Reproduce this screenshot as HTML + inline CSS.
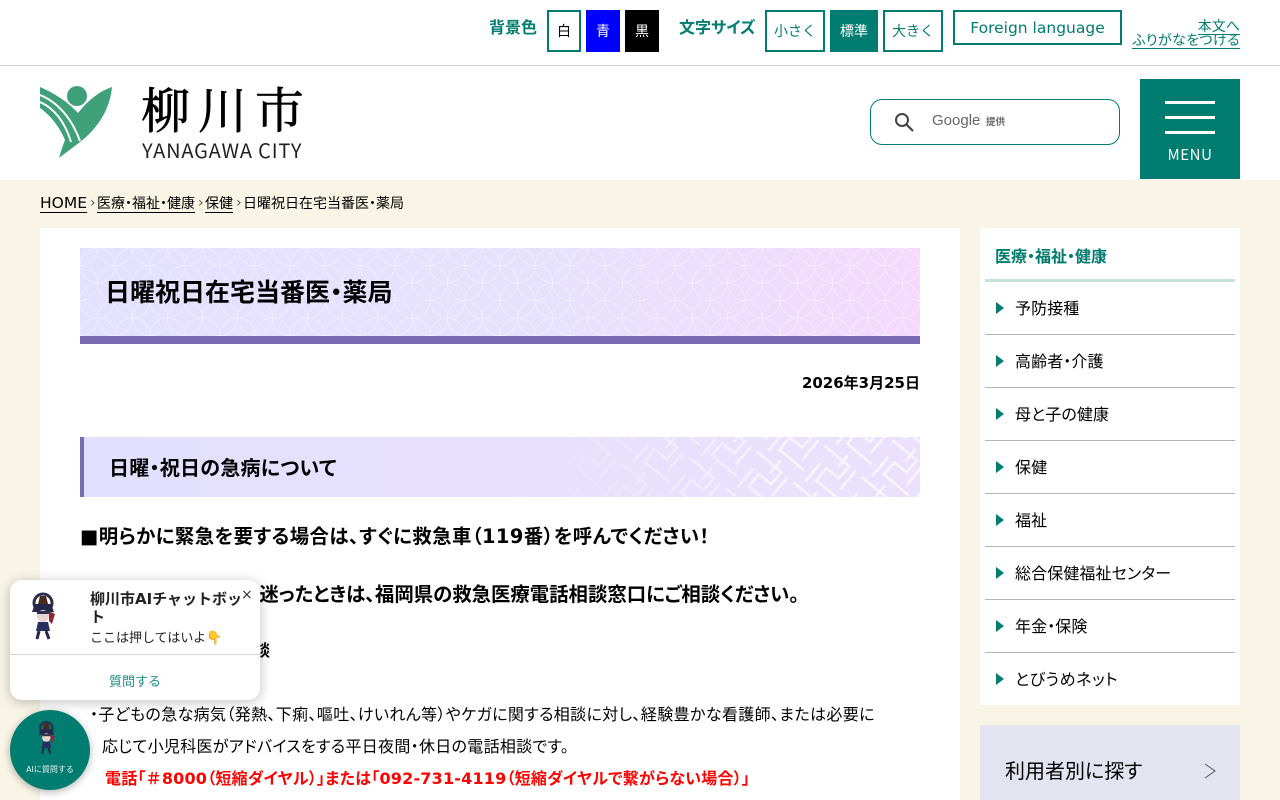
<!DOCTYPE html>
<html lang="ja"><head><meta charset="utf-8"><title>日曜祝日在宅当番医・薬局</title>
<style>
html,body{margin:0;padding:0}
body{width:1280px;height:800px;overflow:hidden;position:relative;background:#f8f5e6;font-family:"DejaVu Sans","Noto Sans CJK JP",sans-serif;color:#000;font-feature-settings:"palt"}
.a{position:absolute;white-space:nowrap}
.n{font-feature-settings:normal}
.b{position:absolute;box-sizing:border-box;border:2px solid #007c70;background:#fff;color:#007c70;text-align:center;font-size:14px;font-feature-settings:normal}
.c{position:absolute;white-space:nowrap;top:194px;font-size:14px;line-height:20px;height:18px}
.c.u{border-bottom:1px solid #000}
.sep{color:#555;top:193px}
.side{position:absolute;left:985px;width:250px;height:53px;border-bottom:1px solid #b4b4b4;box-sizing:border-box}
.side i{position:absolute;left:11px;top:20px;width:0;height:0;border-left:8px solid #007c70;border-top:6px solid transparent;border-bottom:6px solid transparent}
.side span{position:absolute;left:30px;top:15px;font-size:16px;line-height:24px;white-space:nowrap;letter-spacing:.1px}
</style></head><body>
<div class="a" style="left:0;top:0;width:1280px;height:66px;background:#fff;border-bottom:1px solid #ccc;box-sizing:border-box"></div>
<div class="a" style="left:0;top:66px;width:1280px;height:114px;background:#fff"></div>

<div class="a" style="left:489px;top:17px;font-size:16px;line-height:22px;font-weight:700;color:#007c70">背景色</div>
<div class="b" style="left:547px;top:10px;width:34px;height:42px;line-height:40px;color:#000">白</div>
<div class="b" style="left:586px;top:10px;width:34px;height:42px;line-height:40px;color:#fff;background:#0000ff;border-color:#0000ff">青</div>
<div class="b" style="left:625px;top:10px;width:34px;height:42px;line-height:40px;color:#fff;background:#000;border-color:#000">黒</div>
<div class="a" style="left:679px;top:17px;font-size:16px;line-height:22px;font-weight:700;color:#007c70">文字サイズ</div>
<div class="b" style="left:765px;top:10px;width:60px;height:42px;line-height:40px">小さく</div>
<div class="b" style="left:830px;top:10px;width:48px;height:42px;line-height:40px;background:#007c70;color:#fff">標準</div>
<div class="b" style="left:883px;top:10px;width:60px;height:42px;line-height:40px">大きく</div>
<div class="b" style="left:953px;top:10px;width:169px;height:35px;line-height:33px;font-size:15.5px">Foreign language</div>
<div class="a" style="right:40px;top:18px;font-size:14px;line-height:19px;color:#007c70;border-bottom:1px solid #007c70;height:16px">本文へ</div>
<div class="a" style="right:40px;top:32px;font-size:14px;line-height:18px;letter-spacing:.4px;color:#007c70;border-bottom:1px solid #007c70;height:16px">ふりがなをつける</div>

<svg class="a" style="left:40px;top:86px" width="73" height="73" viewBox="0 0 73 73">
<circle cx="37" cy="10" r="10" fill="#3fa07a"/>
<path d="M0 1C14 7 28 16 38 27C48 14 60 5 72 1C70 22 60 38 46 51C38 58 28 65 19 72C21 65 23 59 25 54C19 40 10 29 0 22Z" fill="#3fa07a"/>
<path d="M0 9C18 16 32 33 40 55M0 16C14 22 25 36 31 56" fill="none" stroke="#fff" stroke-width="2"/>
</svg>
<div class="a" style="left:141px;top:76px;font-family:'Noto Serif CJK SC','Noto Sans CJK JP',serif;font-weight:400;-webkit-text-stroke:.7px #000;font-size:49px;line-height:64px;letter-spacing:8px;font-feature-settings:normal">柳川市</div>
<div class="a" style="left:142px;top:138px;font-family:'Noto Sans CJK JP',sans-serif;font-size:20px;line-height:24px;letter-spacing:.8px;color:#222">YANAGAWA CITY</div>

<div class="a" style="left:870px;top:99px;width:250px;height:46px;box-sizing:border-box;border:1px solid #007c70;border-radius:12px;background:#fff"></div>
<svg class="a" style="left:894px;top:112px" width="20" height="20" viewBox="0 0 20 20"><circle cx="8" cy="8" r="6" fill="none" stroke="#444" stroke-width="2"/><path d="M12.5 12.5L19 19" stroke="#444" stroke-width="2.2"/></svg>
<div class="a" style="left:932px;top:111px;font-size:15px;line-height:20px;color:#666;font-family:'Liberation Sans',sans-serif">Google</div>
<div class="a" style="left:986px;top:116px;font-size:9.5px;line-height:14px;font-weight:700;color:#666">提供</div>

<div class="a" style="left:1140px;top:79px;width:100px;height:100px;background:#007c70"></div>
<div class="a" style="left:1165px;top:101px;width:50px;height:3px;background:#fff"></div>
<div class="a" style="left:1165px;top:116px;width:50px;height:3px;background:#fff"></div>
<div class="a" style="left:1165px;top:131px;width:50px;height:3px;background:#fff"></div>
<div class="a" style="left:1140px;top:145px;width:100px;text-align:center;font-family:'Noto Sans CJK JP',sans-serif;font-size:15px;line-height:20px;color:#fff;letter-spacing:.6px">MENU</div>

<a href="#" class="c u" style="left:40px;font-size:15.5px;line-height:18px;color:#000;text-decoration:none">HOME</a>
<span class="c sep" style="left:90px">›</span>
<a href="#" class="c u" style="left:97px;color:#000;text-decoration:none">医療・福祉・健康</a>
<span class="c sep" style="left:198px">›</span>
<a href="#" class="c u" style="left:205px;color:#000;text-decoration:none">保健</a>
<span class="c sep" style="left:236px">›</span>
<span class="c" style="left:243px">日曜祝日在宅当番医・薬局</span>

<div class="a" style="left:40px;top:228px;width:920px;height:572px;background:#fff"></div>
<svg class="a" style="left:80px;top:248px" width="840" height="88">
<defs><linearGradient id="g" x1="0" x2="1" y1="0" y2="0"><stop offset="0" stop-color="#e4e0ff"/><stop offset=".55" stop-color="#e6e2fd"/><stop offset="1" stop-color="#f4d9fd"/></linearGradient>
<pattern id="s" width="35" height="35" patternUnits="userSpaceOnUse"><g fill="none" stroke="#fff" stroke-opacity=".3" stroke-width="1"><circle cx="17.5" cy="17.5" r="17.5"/><circle cx="0" cy="0" r="17.5"/><circle cx="35" cy="0" r="17.5"/><circle cx="0" cy="35" r="17.5"/><circle cx="35" cy="35" r="17.5"/></g></pattern></defs>
<rect width="840" height="88" fill="url(#g)"/><rect width="840" height="88" fill="url(#s)"/></svg>
<div class="a" style="left:105px;top:275px;font-size:25px;line-height:36px;font-weight:700">日曜祝日在宅当番医・薬局</div>
<div class="a" style="left:80px;top:336px;width:840px;height:8px;background:#7b6bb3"></div>
<div class="a" style="right:360px;top:372px;font-size:15px;line-height:22px;font-weight:700">2026年3月25日</div>

<svg class="a" style="left:80px;top:437px" width="840" height="60">
<defs><linearGradient id="g2" x1="0" x2="1" y1="0" y2="0"><stop offset="0" stop-color="#e2e0ff"/><stop offset="1" stop-color="#ebe1fc"/></linearGradient>
<linearGradient id="m" x1="0" x2="1" y1="0" y2="0"><stop offset=".55" stop-color="#000"/><stop offset=".85" stop-color="#fff"/></linearGradient>
<mask id="mk"><rect width="840" height="60" fill="url(#m)"/></mask>
<pattern id="p" width="48" height="48" patternUnits="userSpaceOnUse" patternTransform="rotate(40)"><path d="M0 8H32V24H16V40H48M24 0V16M8 24V48M40 8V32" fill="none" stroke="#fff" stroke-opacity=".65" stroke-width="2.6"/></pattern></defs>
<rect width="840" height="60" fill="url(#g2)"/><rect width="840" height="60" fill="url(#p)" mask="url(#mk)"/><rect width="4" height="60" fill="#7b6bb3"/></svg>
<div class="a" style="left:109px;top:453px;font-size:20px;line-height:30px;font-weight:700;letter-spacing:.25px">日曜・祝日の急病について</div>

<div class="a" style="left:80px;top:522px;font-size:19.4px;line-height:30px;font-weight:700;letter-spacing:.45px">■明らかに緊急を要する場合は、すぐに救急車（119番）を呼んでください！</div>
<div class="a" style="right:481px;top:580px;font-size:19.4px;line-height:30px;font-weight:700">■救急車を呼ぶか迷ったときは、福岡県の救急医療電話相談窓口にご相談ください。</div>
<div class="a" style="right:1010px;top:639px;font-size:16px;line-height:24px;font-weight:700">・子ども医療電話相談</div>
<div class="a" style="left:90px;top:703px;font-size:16px;line-height:24px;letter-spacing:.36px">・子どもの急な病気（発熱、下痢、嘔吐、けいれん等）やケガに関する相談に対し、経験豊かな看護師、または必要に</div>
<div class="a" style="left:102px;top:735px;font-size:16px;line-height:24px;letter-spacing:.3px">応じて小児科医がアドバイスをする平日夜間・休日の電話相談です。</div>
<div class="a" style="left:105px;top:767px;font-size:16px;line-height:24px;font-weight:700;color:#f00;letter-spacing:.2px">電話「<span class="n">＃</span>8000（短縮ダイヤル）」または「092-731-4119（短縮ダイヤルで繋がらない場合）」</div>

<div class="a" style="left:980px;top:228px;width:260px;height:477px;background:#fff"></div>
<div class="a" style="left:995px;top:245px;font-size:16px;line-height:23px;font-weight:700;color:#007c70">医療・福祉・健康</div>
<div class="a" style="left:985px;top:279px;width:250px;height:3px;background:#c5e3da"></div>
<div class="side" style="top:282px"><i></i><span>予防接種</span></div>
<div class="side" style="top:335px"><i></i><span>高齢者・介護</span></div>
<div class="side" style="top:388px"><i></i><span>母と子の健康</span></div>
<div class="side" style="top:441px"><i></i><span>保健</span></div>
<div class="side" style="top:494px"><i></i><span>福祉</span></div>
<div class="side" style="top:547px"><i></i><span>総合保健福祉センター</span></div>
<div class="side" style="top:600px"><i></i><span>年金・保険</span></div>
<div class="side" style="top:653px;border:0"><i></i><span style="letter-spacing:.6px">とびうめネット</span></div>

<div class="a" style="left:980px;top:725px;width:260px;height:75px;background:#e4e4f1"></div>
<div class="a" style="left:1005px;top:756px;font-size:20px;line-height:30px">利用者別に探す</div>
<svg class="a" style="left:1203px;top:762px" width="14" height="18" viewBox="0 0 14 18"><path d="M2 2L12 9L2 16" fill="none" stroke="#555" stroke-width="1"/></svg>

<div class="a" style="left:10px;top:580px;width:250px;height:120px;background:#fff;border-radius:12px;box-shadow:0 2px 12px rgba(0,0,0,.25)"></div>
<svg class="a" style="left:24px;top:590px" width="40" height="56" viewBox="0 0 40 56">
<circle cx="19" cy="13" r="9" fill="none" stroke="#2b2f4a" stroke-width="3"/><path d="M16 6h6l2 8h-10z" fill="#4a2a20"/><path d="M11 14h16l3 8H8z" fill="#23284a"/><circle cx="19" cy="26" r="6" fill="#e8d4d0"/><path d="M13 24h12v-3H13z" fill="#2b2f4a"/><path d="M14 32h10l2 9H12z" fill="#25305f"/><path d="M25 21l6 3-3 10-3-3z" fill="#8a2a3a"/><path d="M15 41l-2 8M22 41l3 8" stroke="#23284a" stroke-width="3"/></svg>
<div class="a n" style="left:90px;top:590px;width:155px;white-space:normal;font-size:15px;line-height:18px;font-weight:700;color:#222;word-break:break-all">柳川市AIチャットボット</div>
<div class="a" style="left:241px;top:586px;font-size:14px;line-height:18px;color:#333">×</div>
<div class="a n" style="left:90px;top:629px;font-size:13px;line-height:20px;color:#222">ここは押してはいよ<span style="color:#f0b030">👇</span></div>
<div class="a" style="left:10px;top:654px;width:250px;height:1px;background:#d4d4d4"></div>
<div class="a n" style="left:10px;top:673px;width:250px;text-align:center;font-size:13px;line-height:20px;color:#1f8f84">質問する</div>

<div class="a" style="left:10px;top:710px;width:80px;height:80px;border-radius:50%;background:#007c70;box-shadow:0 2px 8px rgba(0,0,0,.3)"></div>
<svg class="a" style="left:33px;top:716px" width="28" height="46" viewBox="0 0 40 56">
<circle cx="19" cy="13" r="9" fill="none" stroke="#2b2f4a" stroke-width="3"/><path d="M16 6h6l2 8h-10z" fill="#4a2a20"/><path d="M11 14h16l3 8H8z" fill="#23284a"/><circle cx="19" cy="26" r="6" fill="#e8d4d0"/><path d="M13 24h12v-3H13z" fill="#2b2f4a"/><path d="M14 32h10l2 9H12z" fill="#25305f"/><path d="M25 21l6 3-3 10-3-3z" fill="#8a2a3a"/><path d="M15 41l-2 8M22 41l3 8" stroke="#23284a" stroke-width="3"/></svg>
<div class="a n" style="left:10px;top:763px;width:80px;text-align:center;font-size:8px;line-height:14px;color:#e4f2ef">AIに質問する</div>
</body></html>
